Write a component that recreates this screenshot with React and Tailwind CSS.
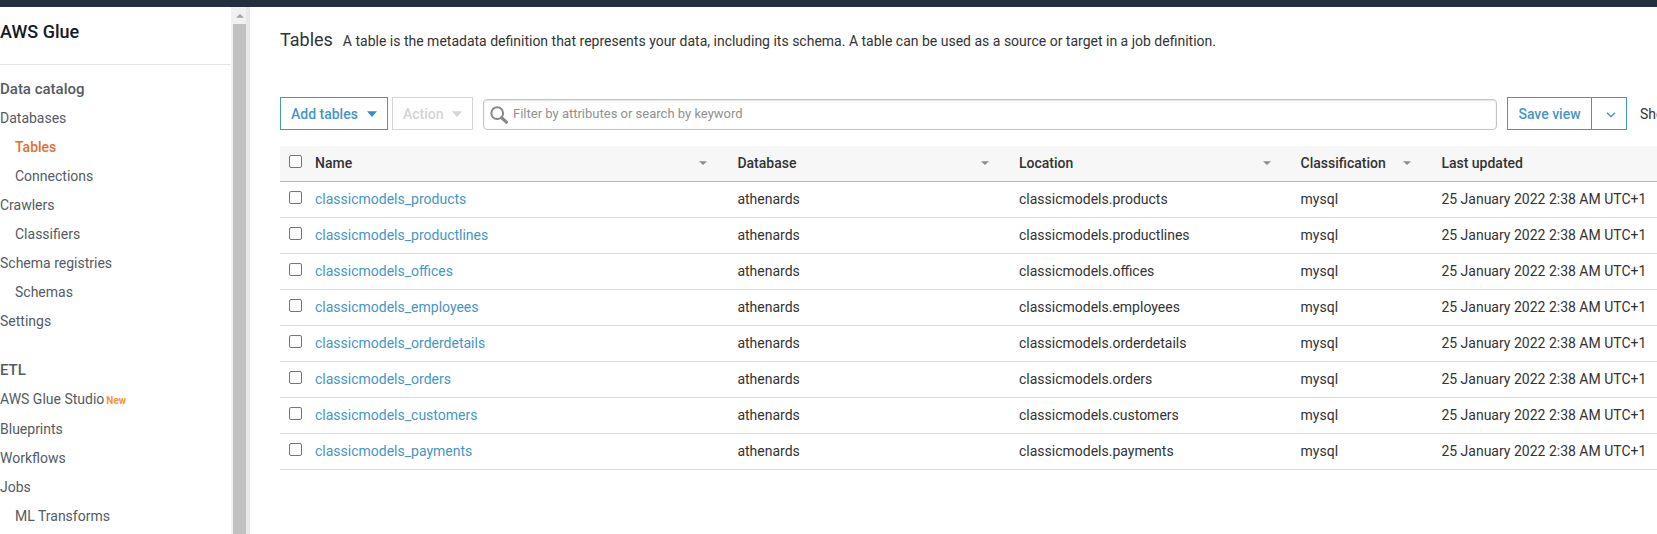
import React from "react";

const catalog = [
  { label: "Databases" },
  { label: "Tables", nested: true, active: true },
  { label: "Connections", nested: true },
  { label: "Crawlers" },
  { label: "Classifiers", nested: true },
  { label: "Schema registries" },
  { label: "Schemas", nested: true },
  { label: "Settings" },
];

const etl = [
  { label: "AWS Glue Studio", isNew: true },
  { label: "Blueprints" },
  { label: "Workflows" },
  { label: "Jobs" },
  { label: "ML Transforms", nested: true },
];

const columns = [
  { label: "Name", width: "w-[30%]", sortable: true },
  { label: "Database", width: "w-[20%]", sortable: true },
  { label: "Location", width: "w-[20%]", sortable: true },
  { label: "Classification", width: "w-[10%]", sortable: true },
  { label: "Last updated", width: "w-[20%]" },
];

const tables = [
  "products",
  "productlines",
  "offices",
  "employees",
  "orderdetails",
  "orders",
  "customers",
  "payments",
];

function Caret({ className }) {
  return (
    <svg viewBox="0 0 10 6" preserveAspectRatio="none" className={className} aria-hidden="true">
      <path d="M0 0.3h10L5 5.9z" fill="currentColor" />
    </svg>
  );
}

function NavSection({ title, items }) {
  return (
    <section className="mb-5">
      <h2 className="text-[15px] leading-[29px] font-medium text-[#545b64]">{title}</h2>
      <ul>
        {items.map((item) => (
          <li key={item.label} className={item.nested ? "pl-[15px]" : ""}>
            <a
              href="#"
              className={
                item.active
                  ? "block leading-[29px] font-medium text-[#e07032]"
                  : "block leading-[29px] text-[#545b64]"
              }
            >
              {item.label}
              {item.isNew && (
                <span className="ml-[2px] text-[10px] font-bold text-[#f7943a]">New</span>
              )}
            </a>
          </li>
        ))}
      </ul>
    </section>
  );
}

function Sidebar() {
  return (
    <aside className="flex w-[250px] shrink-0">
      <nav className="min-w-0 flex-1">
        <div className="h-[58px] border-b border-[#e4e6e6] pt-[13px]">
          <h1 className="text-lg leading-6 font-medium text-[#16191f]">AWS Glue</h1>
        </div>
        <div className="pt-[10px]">
          <NavSection title="Data catalog" items={catalog} />
          <NavSection title="ETL" items={etl} />
        </div>
      </nav>
      <div className="flex w-[19px] flex-col border-r-4 border-[#e7e9e9] bg-[#f1f1f1] pl-[2px]">
        <div className="flex h-[17px] shrink-0 items-center justify-center">
          <Caret className="h-1 w-2 rotate-180 text-[#a3a3a3]" />
        </div>
        <div className="flex-1 bg-[#c1c1c1]" />
      </div>
    </aside>
  );
}

function Toolbar() {
  return (
    <div className="flex items-center whitespace-nowrap">
      <button
        type="button"
        className="mr-1 flex h-[33px] w-[108px] items-center justify-between border border-[#4596c8] px-[10px] font-medium text-[#4596c8]"
      >
        Add tables
        <Caret className="h-[6px] w-[10px] text-[#2e8fcb]" />
      </button>
      <button
        type="button"
        disabled
        className="mr-[10px] flex h-[33px] w-[81px] items-center justify-between border border-[#d5d5d5] px-[10px] font-medium text-[#d5d5d5]"
      >
        Action
        <Caret className="h-[6px] w-[10px]" />
      </button>
      <label className="mt-[2px] mr-[10px] flex h-[31px] flex-1 items-center rounded-[4px] border border-[#c4c4c4] pl-[6px] shadow-[inset_0_1px_2px_rgba(0,0,0,0.12)]">
        <svg viewBox="0 0 18 18" className="size-[18px] shrink-0 text-[#888]" fill="none" stroke="currentColor" aria-hidden="true">
          <circle cx="7.2" cy="7.2" r="5.9" strokeWidth="2" />
          <path d="M11.8 11.8l4.6 4.4" strokeWidth="3.2" strokeLinecap="round" />
        </svg>
        <input
          type="text"
          aria-label="Filter tables"
          placeholder="Filter by attributes or search by keyword"
          className="ml-[5px] min-w-0 flex-1 bg-transparent text-[13px] outline-none placeholder:text-[#919191]"
        />
      </label>
      <div className="mr-[13px] flex h-[33px] border border-[#4596c8] text-[#4596c8]">
        <button type="button" className="w-[84px] border-r border-[#4596c8] text-center font-medium">
          Save view
        </button>
        <button type="button" aria-label="More view options" className="flex w-[34px] items-center justify-center">
          <svg viewBox="0 0 10 6" className="mt-[3px] ml-1 h-[6px] w-[10px]" fill="none" stroke="currentColor" strokeWidth="1.3" aria-hidden="true">
            <path d="M1 0.8l4 4 4-4" />
          </svg>
        </button>
      </div>
      <span className="w-[75px] text-[#333]">Show</span>
    </div>
  );
}

function RowCheck({ label }) {
  return (
    <input
      type="checkbox"
      aria-label={label}
      className="mb-1 block size-[13px] appearance-none rounded-[2px] border border-[#767676] bg-white"
    />
  );
}

function TableList() {
  return (
    <table className="mt-4 w-full table-fixed border-collapse text-left text-[#333]">
      <thead>
        <tr className="h-[35px] border-b border-[#b5b7b9] bg-[#f7f7f7]">
          <th className="w-[27px] pl-[9px]">
            <RowCheck label="Select all tables" />
          </th>
          {columns.map((c) => (
            <th key={c.label} className={`${c.width} pl-2 font-medium`}>
              <span className="flex items-center justify-between pr-[22px]">
                {c.label}
                {c.sortable && <Caret className="h-1 w-2 text-[#8c8c8c]" />}
              </span>
            </th>
          ))}
        </tr>
      </thead>
      <tbody>
        {tables.map((name) => (
          <tr key={name} className="h-9 border-b border-[#dcdcdc]">
            <td className="pl-[9px]">
              <RowCheck label={`Select classicmodels_${name}`} />
            </td>
            <td className="pl-2">
              <a href="#" className="text-[#4596c8]">classicmodels_{name}</a>
            </td>
            <td className="pl-2">athenards</td>
            <td className="pl-2">classicmodels.{name}</td>
            <td className="pl-2">mysql</td>
            <td className="pl-2">25 January 2022 2:38 AM UTC+1</td>
          </tr>
        ))}
      </tbody>
    </table>
  );
}

export default function App() {
  return (
    <div className="flex h-screen flex-col overflow-hidden bg-white font-['Roboto',sans-serif] text-sm text-[#333]">
      <header className="h-[7px] shrink-0 bg-[#232f3e]" />
      <div className="flex min-h-0 flex-1">
        <Sidebar />
        <main className="min-w-0 flex-1 overflow-hidden pt-[21px] pl-[30px]">
          <div className="flex items-baseline gap-[10px]">
            <h2 className="text-lg leading-6 text-[#333]">Tables</h2>
            <p>
              A table is the metadata definition that represents your data, including its schema. A table can be used as a source or target in a job definition.
            </p>
          </div>
          <div className="mt-[45px] w-full min-w-[1435px]">
            <Toolbar />
            <TableList />
          </div>
        </main>
      </div>
    </div>
  );
}
